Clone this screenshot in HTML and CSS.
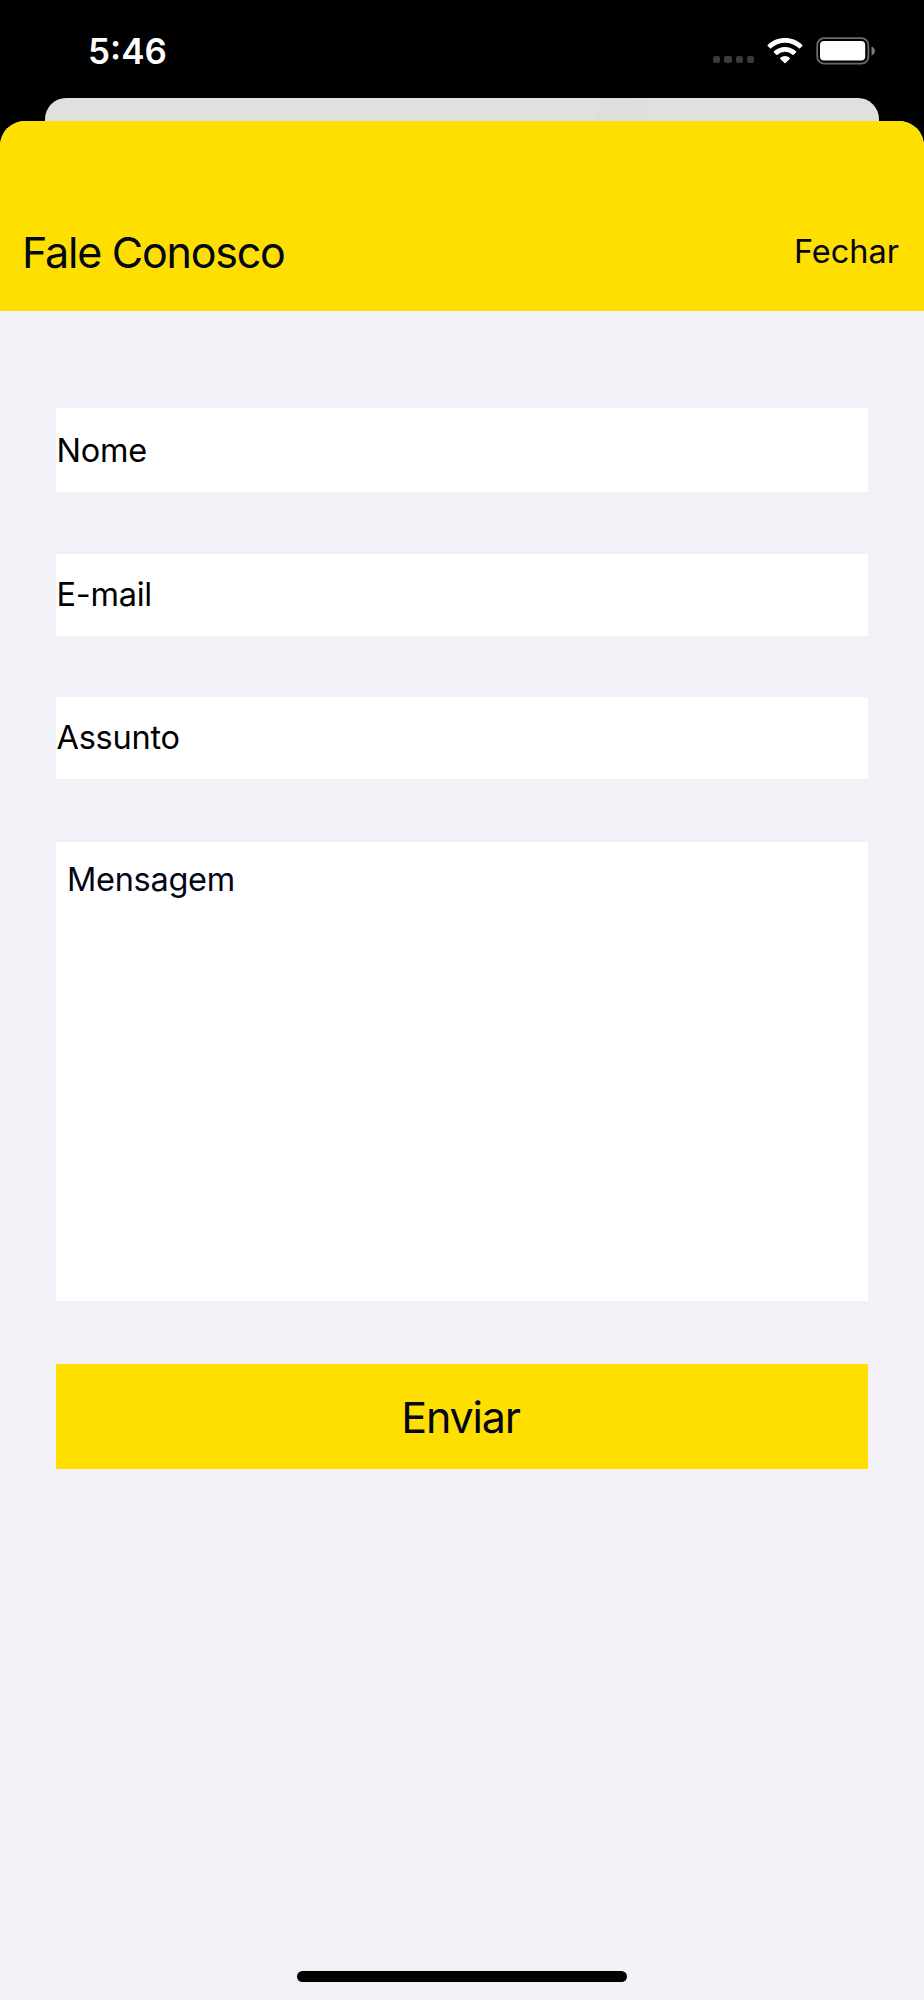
FILE: index.html
```html
<!DOCTYPE html>
<html lang="pt-BR">
<head>
<meta charset="utf-8">
<title>Fale Conosco</title>
<link rel="stylesheet" href="styles.css">
</head>
<body>
<div class="screen">
  <div class="status">
    <span class="time">5<span class="colon">:</span>46</span>
    <div class="indicators">
      <div class="dots"><i></i><i></i><i></i><i></i></div>
      <svg class="wifi" width="36" height="28" viewBox="0 0 36 28" fill="#fff">
        <path d="M18 1C24.8 1 30.8 3.600 35.300 7.900Q35.800 8.500 35.300 9L33.100 11.300Q32.500 11.900 31.900 11.300A20 20 0 0 0 4.100 11.300Q3.500 11.900 2.900 11.300L.7 9Q.2 8.500.7 7.900C5.200 3.600 11.200 1 18 1Z"/>
        <path d="M18 9.900C22.400 9.900 26.200 11.500 29 14.200Q29.600 14.800 29 15.400L26.700 17.700Q26.100 18.300 25.500 17.700A11.200 11.200 0 0 0 10.500 17.700Q9.900 18.300 9.300 17.700L7 15.400Q6.400 14.800 7 14.200C9.800 11.500 13.600 9.900 18 9.900Z"/>
        <path d="M18 19.100Q20.800 19.100 22.700 20.700Q23.300 21.200 22.700 21.900L18.500 26.100Q18 26.600 17.500 26.100L13.300 21.900Q12.700 21.200 13.300 20.700Q15.200 19.100 18 19.100Z"/>
      </svg>
      <svg class="battery" width="60" height="28" viewBox="0 0 60 28">
        <rect x="1.200" y="1.200" width="51.200" height="25.400" rx="7" fill="none" stroke="#6b6b6b" stroke-width="1.800"/>
        <rect x="4" y="4" width="45.200" height="19.400" rx="4" fill="#fff"/>
        <path d="M55.500 9.500Q58.900 10.800 58.900 14T55.500 18.500Z" fill="#7a7a7a"/>
      </svg>
    </div>
  </div>
  <div class="behind"></div>
  <div class="sheet">
    <header class="header">
      <h1 class="title">Fale Conosco</h1>
      <span class="close">Fechar</span>
    </header>
    <main class="form">
      <div class="field name"><span>Nome</span></div>
      <div class="field email"><span>E-mail</span></div>
      <div class="field subject"><span>Assunto</span></div>
      <div class="message"><span>Mensagem</span></div>
      <div class="send"><span>Enviar</span></div>
    </main>
    <div class="home"></div>
  </div>
</div>
</body>
</html>
```
FILE: styles.css
```css
* { box-sizing: border-box; }
body {
  margin: 0;
  background: #000;
  font-family: Inter, "Liberation Sans", sans-serif;
  color: #020617;
}
.screen {
  width: 924px;
  height: 2000px;
  display: flex;
  flex-direction: column;
  overflow: hidden;
}
.status {
  height: 98px;
  flex: none;
  display: flex;
  justify-content: space-between;
  padding: 30px 48px 0 88px;
  color: #fff;
}
.time {
  font-size: 35px;
  line-height: 42px;
  font-weight: 600;
}
.colon { position: relative; top: -1px; }
.indicators { display: flex; align-items: flex-start; padding-top: 7px; }
.dots { display: flex; gap: 4px; padding-top: 19px; margin-right: 13px; }
.dots i { width: 7.200px; height: 7.200px; border-radius: 2px; background: #3a3a3a; }
.wifi { margin-right: 13px; }
.behind {
  flex: none;
  height: 23px;
  margin: 0 45px;
  border-radius: 21px 21px 0 0;
  background: linear-gradient(115deg, #e0e0e0 66%, #dddddd 66.200%, #dfdfdf 72%, #e0e0e0 72.200%);
}
.sheet {
  flex: 1;
  display: flex;
  flex-direction: column;
  border-radius: 25px 25px 0 0;
  overflow: hidden;
  background: #f2f1f7;
}
.header {
  height: 190px;
  flex: none;
  display: flex;
  justify-content: space-between;
  align-items: flex-start;
  padding: 105px 25px 0 22px;
  background: #ffdf00;
}
.title {
  margin: 0;
  font-size: 43px;
  line-height: 52px;
  font-weight: 400;
  letter-spacing: -1.250px;
}
.close {
  padding-top: 6px;
  font-size: 32.500px;
  line-height: 40px;
}
.form {
  flex: 1;
  display: flex;
  flex-direction: column;
  padding: 97px 56px 0;
}
.field {
  display: flex;
  align-items: center;
  background: #fff;
  color: #000;
  font-size: 32.500px;
  line-height: 40px;
  letter-spacing: -0.250px;
  padding-left: 0.500px;
}
.name { height: 84px; margin-bottom: 62px; padding-top: 2px; }
.email { height: 82px; margin-bottom: 61px; }
.subject { height: 82px; margin-bottom: 63px; }
.message {
  height: 459px;
  margin-bottom: 63px;
  padding: 18px 11px;
  background: #fff;
  font-size: 32.500px;
  line-height: 40px;
  letter-spacing: -0.300px;
}
.send {
  height: 105px;
  display: flex;
  align-items: center;
  justify-content: center;
  background: #ffdf00;
  font-size: 43px;
  line-height: 52px;
  letter-spacing: -1.200px;
  padding-right: 3px;
}
.home {
  width: 330px;
  height: 11px;
  margin: 0 auto 18px;
  border-radius: 6px;
  background: #000;
}
```
